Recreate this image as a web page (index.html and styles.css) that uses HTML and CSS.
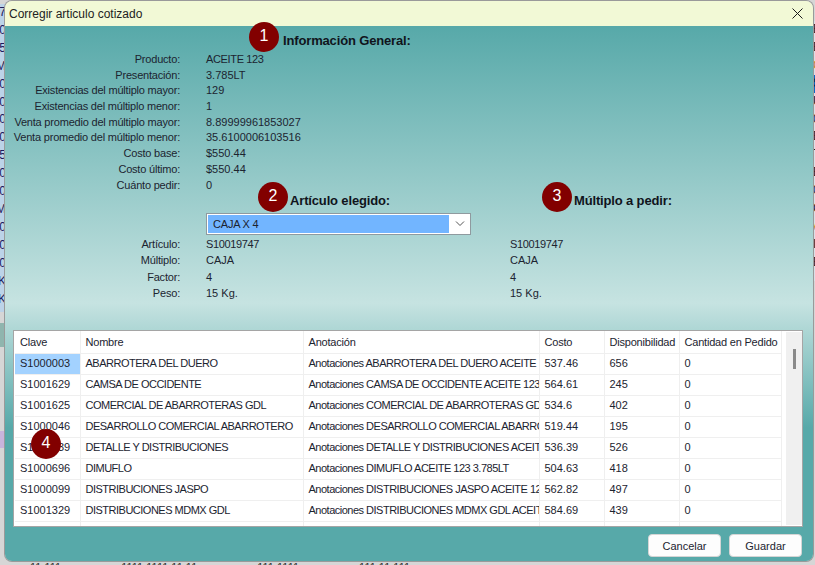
FILE: index.html
```html
<!DOCTYPE html>
<html lang="es">
<head>
<meta charset="utf-8">
<title>Corregir articulo cotizado</title>
<link rel="stylesheet" href="styles.css">
</head>
<body>
<div class="edge edge-left">
  <span class="purple">7</span><span>0</span><span>5</span><span>M</span><span>0</span><span>0</span><span>0</span><span>0</span><span>5</span><span>0</span><span>0</span><span>M</span><span>0</span><span>0</span><span>0</span><span>K</span><span>K</span>
</div>
<div class="patch patch-green"></div>
<div class="patch patch-purple"></div>
<div class="edge edge-right">
  <span>E</span><span>B</span><span class="orange">C</span><span class="picked">S</span><span>U</span><span>0</span><span>E</span><span>T</span><span>E</span><span>0</span><span>C</span><span class="orange">A</span><span>I</span><span>E</span>
</div>
<div class="edge-bottom"><span>11 111</span><span>1111 1111 11 11</span><span>111 1111</span><span>111 11 111</span></div>
<div class="dialog">
  <div class="titlebar">
    <span>Corregir articulo cotizado</span>
    <svg class="close" width="11" height="11" viewBox="0 0 11 11"><path d="M.5.5l10 10M10.500.5l-10 10" stroke="#1a1a1a" fill="none"/></svg>
  </div>
  <div class="body">
    <h2 class="head head-info"><span class="badge">1</span>Información General:</h2>
    <dl class="info">
      <dt>Producto:</dt><dd class="caps">ACEITE 123</dd>
      <dt>Presentación:</dt><dd>3.785LT</dd>
      <dt>Existencias del múltiplo mayor:</dt><dd>129</dd>
      <dt>Existencias del múltiplo menor:</dt><dd>1</dd>
      <dt>Venta promedio del múltiplo mayor:</dt><dd>8.89999961853027</dd>
      <dt>Venta promedio del múltiplo menor:</dt><dd>35.6100006103516</dd>
      <dt>Costo base:</dt><dd>$550.44</dd>
      <dt>Costo último:</dt><dd>$550.44</dd>
      <dt>Cuánto pedir:</dt><dd>0</dd>
    </dl>
    <div class="heads2">
      <h2 class="head"><span class="badge">2</span>Artículo elegido:</h2>
      <h2 class="head"><span class="badge">3</span>Múltiplo a pedir:</h2>
    </div>
    <div class="combo">
      <div class="combo-value">CAJA X 4</div>
      <svg width="10" height="6" viewBox="0 0 10 6"><path d="M1 .5l4 4 4-4" stroke="#555" fill="none"/></svg>
    </div>
    <dl class="info info3">
      <dt>Artículo:</dt><dd class="caps">S10019747</dd><dd class="caps">S10019747</dd>
      <dt>Múltiplo:</dt><dd>CAJA</dd><dd>CAJA</dd>
      <dt>Factor:</dt><dd>4</dd><dd>4</dd>
      <dt>Peso:</dt><dd>15 Kg.</dd><dd>15 Kg.</dd>
    </dl>
    <div class="table-box">
      <table>
        <thead><tr><th>Clave</th><th>Nombre</th><th>Anotación</th><th>Costo</th><th>Disponibilidad</th><th>Cantidad en Pedido</th></tr></thead>
        <tbody>
          <tr><td class="sel">S1000003</td><td>ABARROTERA DEL DUERO</td><td>Anotaciones ABARROTERA DEL DUERO ACEITE 123 3.785LT</td><td>537.46</td><td>656</td><td>0</td></tr>
          <tr><td>S1001629</td><td>CAMSA DE OCCIDENTE</td><td>Anotaciones CAMSA DE OCCIDENTE ACEITE 123 3.785LT</td><td>564.61</td><td>245</td><td>0</td></tr>
          <tr><td>S1001625</td><td>COMERCIAL DE ABARROTERAS GDL</td><td>Anotaciones COMERCIAL DE ABARROTERAS GDL ACEITE 123</td><td>534.6</td><td>402</td><td>0</td></tr>
          <tr><td>S1000046</td><td>DESARROLLO COMERCIAL ABARROTERO</td><td>Anotaciones DESARROLLO COMERCIAL ABARROTERO ACEITE</td><td>519.44</td><td>195</td><td>0</td></tr>
          <tr><td>S1000039</td><td>DETALLE Y DISTRIBUCIONES</td><td>Anotaciones DETALLE Y DISTRIBUCIONES ACEITE 123</td><td>536.39</td><td>526</td><td>0</td></tr>
          <tr><td>S1000696</td><td>DIMUFLO</td><td>Anotaciones DIMUFLO ACEITE 123 3.785LT</td><td>504.63</td><td>418</td><td>0</td></tr>
          <tr><td>S1000099</td><td>DISTRIBUCIONES JASPO</td><td>Anotaciones DISTRIBUCIONES JASPO ACEITE 123 3.785LT</td><td>562.82</td><td>497</td><td>0</td></tr>
          <tr><td>S1001329</td><td>DISTRIBUCIONES MDMX GDL</td><td>Anotaciones DISTRIBUCIONES MDMX GDL ACEITE 123</td><td>584.69</td><td>439</td><td>0</td></tr>
          <tr class="stub"><td></td><td></td><td></td><td></td><td></td><td></td></tr>
        </tbody>
      </table>
      <div class="scrollbar"><div class="thumb"></div></div>
      <span class="badge badge4">4</span>
    </div>
    <div class="actions">
      <button type="button">Cancelar</button>
      <button type="button">Guardar</button>
    </div>
  </div>
</div>
</body>
</html>
```

FILE: styles.css
```css
html, body { margin: 0; height: 100%; }
body {
  position: relative;
  width: 815px;
  height: 565px;
  overflow: hidden;
  background: #d6d6d6;
  font-family: "Liberation Sans", sans-serif;
  font-size: 11px;
  color: #1c2430;
}
.edge {
  position: absolute;
  top: 4px;
  width: 5px;
  display: flex;
  flex-direction: column;
  overflow: hidden;
  font-size: 12px;
  line-height: 17.9px;
  color: #1a1a60;
  background: #bcd3e8;
}
.edge-left { left: 0; height: 308px; align-items: flex-end; }
.edge-left span { margin-right: -1px; }
.edge-right {
  left: 813px;
  width: 2px;
  top: 21px;
  height: 260px;
  background: #d9dfe6;
  color: #222;
}
.edge-right .orange { color: #c8801e; }
.edge-right .picked { background: #0b66c3; color: #0b2a50; }
.purple { color: #20205c; }
.patch { position: absolute; left: 0; width: 5px; }
.patch-green { top: 323px; height: 24px; background: #8fb5ae; }
.patch-purple { top: 431px; height: 17px; background: #c9b4dc; }
.edge-bottom {
  position: absolute;
  top: 560px;
  left: 30px;
  display: flex;
  gap: 60px;
  font-size: 11px;
  line-height: 14px;
  color: #333;
}
.dialog {
  position: relative;
  box-sizing: border-box;
  width: 808px;
  height: 560px;
  margin: 1px 0 0 5px;
  border-radius: 7px;
  overflow: hidden;
  display: flex;
  flex-direction: column;
  box-shadow: 0 0 0 1px #9a9a9a;
}
.titlebar {
  height: 25px;
  flex: none;
  background: #f2f9d6;
  display: flex;
  align-items: center;
  justify-content: space-between;
  padding: 0 10px 0 4px;
  font-size: 12px;
  color: #222;
}
.body {
  flex: 1;
  position: relative;
  padding: 0 11px 0 8px;
  display: flex;
  flex-direction: column;
  background: linear-gradient(#57a9a9 0, #c6e3e1 277px, #57a9a9 402px);
}
.head {
  margin: 0;
  font-size: 13px;
  font-weight: 700;
  line-height: 16px;
  letter-spacing: -0.15px;
  color: #10141c;
  position: relative;
}
.head-info { margin: 7px 0 3px 270px; }
.badge {
  position: absolute;
  width: 30px;
  height: 30px;
  border-radius: 50%;
  background: #820000;
  color: #fff;
  font-size: 16px;
  font-weight: 400;
  line-height: 28px;
  letter-spacing: 0;
  text-align: center;
  left: -34px;
  top: -11px;
}
.info {
  margin: 0;
  display: grid;
  grid-template-columns: 167px 1fr;
  column-gap: 26px;
  grid-auto-rows: 15.7px;
  line-height: 15.7px;
  white-space: nowrap;
}
.info dt { text-align: right; letter-spacing: -0.2px; }
.info dd { margin: 0; }
.info dd.caps { letter-spacing: -0.35px; }
.heads2 {
  display: flex;
  margin: 0 0 0 277px;
  height: 16px;
  flex: none;
}
.heads2 .head { width: 284px; flex: none; }
.heads2 .badge { left: -32px; }
.combo {
  box-sizing: border-box;
  width: 265px;
  height: 22px;
  margin: 4px 0 0 193px;
  border: 1px solid #8f9a9f;
  background: #fff;
  padding: 1px;
  display: flex;
  align-items: center;
  flex: none;
}
.combo-value {
  flex: 1;
  height: 100%;
  background: #72b5ff;
  padding-left: 5px;
  line-height: 18px;
  letter-spacing: -0.2px;
}
.combo svg { margin: 0 4px 0 6px; }
.info3 {
  margin-top: 1px;
  grid-template-columns: 167px 330px 1fr;
  column-gap: 0;
  grid-auto-rows: 16.3px;
  line-height: 16.3px;
}
.info3 dd:nth-of-type(odd) { padding-left: 26px; }
.table-box {
  position: relative;
  box-sizing: border-box;
  width: 790px;
  height: 197px;
  margin-top: 29px;
  border: 1px solid #a5a5a5;
  background: #fff;
  overflow: hidden;
  display: flex;
  flex: none;
  padding: 0 1px;
}
table {
  border-collapse: collapse;
  table-layout: fixed;
  width: 766px;
  flex: none;
  align-self: flex-start;
}
table th:nth-child(1) { width: 65px; }
table th:nth-child(2) { width: 223px; }
table th:nth-child(3) { width: 236px; }
table th:nth-child(4) { width: 65px; }
table th:nth-child(5) { width: 75px; }
table th:nth-child(6) { width: 102px; }
th, td {
  padding: 0 0 0 5px;
  box-sizing: border-box;
  border-right: 1px solid #efefef;
  border-bottom: 1px solid #efefef;
  font-weight: 400;
  text-align: left;
  white-space: nowrap;
  overflow: hidden;
  line-height: 19px;
}
th { height: 22px; letter-spacing: -0.2px; }
td { height: 21px; }
td:nth-child(2), td:nth-child(3) { letter-spacing: -0.5px; }
td.sel { background: #a3d2ff; }
.scrollbar {
  position: relative;
  width: 17px;
  margin: 1px 0 1px 4px;
  background: #f0f0f0;
  flex: none;
}
.thumb {
  position: absolute;
  left: 7px;
  top: 17px;
  width: 3px;
  height: 20px;
  background: #8a8a8a;
}
.badge4 { left: 17px; top: 98px; }
.actions {
  display: flex;
  justify-content: flex-end;
  gap: 8px;
  margin-top: 7px;
}
button {
  box-sizing: border-box;
  height: 23px;
  width: 73px;
  border: 1px solid #d5d5d5;
  border-radius: 4px;
  background: #fdfdfd;
  font: inherit;
  color: #1c2430;
  padding: 0;
}
```
